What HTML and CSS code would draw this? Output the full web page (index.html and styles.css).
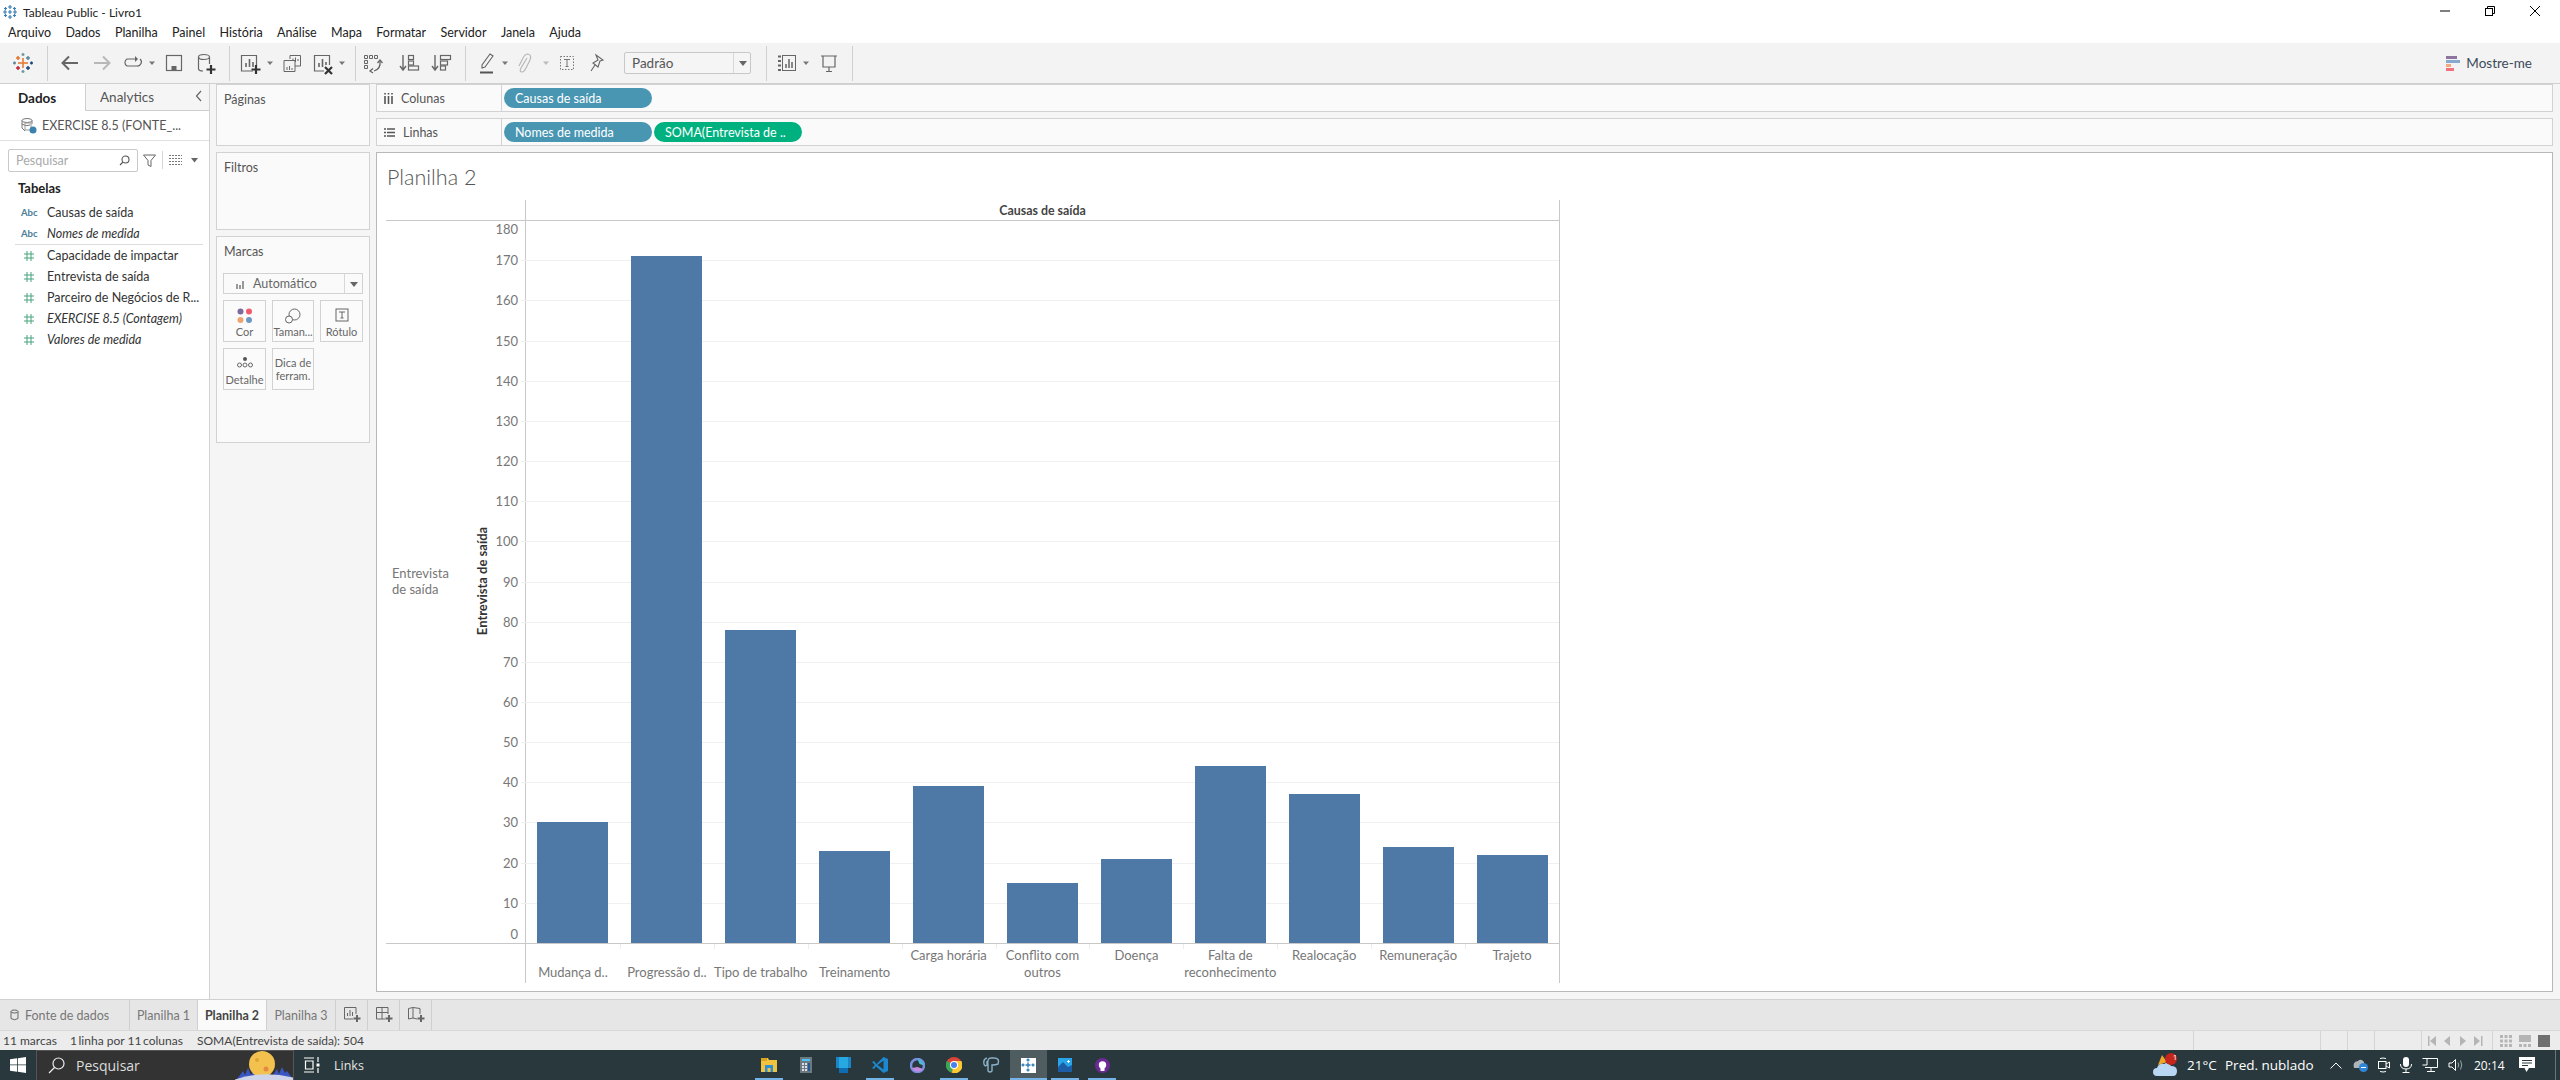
FILE: index.html
```html
<!DOCTYPE html>
<html lang="pt-BR">
<head>
<meta charset="utf-8">
<title>Tableau Public - Livro1</title>
<link rel="stylesheet" href="styles.css">
</head>
<body>
<header class="titlebar">
  <svg class="app-logo" width="16" height="16" viewBox="-8 -8 16 16"><g stroke="#3a7fb5" stroke-width="1.2" fill="none"><path d="M-2 0H2M0-2V2M-2-5H2M0-7V-3M-2 5H2M0 3V7M-7 0H-3M-5-2V2M3 0H7M5-2V2M-6-3.5H-3M-4.500-5V-2M3-3.500H6M4.500-5V-2M-6 3.500H-3M-4.500 2V5M3 3.500H6M4.500 2V5"/></g></svg>
  <span class="title-text">Tableau Public - Livro1</span>
  <div class="win-controls">
    <svg width="16" height="16" viewBox="0 0 16 16"><path d="M3 8H13" stroke="#000" stroke-width="1"/></svg>
    <svg width="16" height="16" viewBox="0 0 16 16" fill="none" stroke="#000"><rect x="3.500" y="5.500" width="7" height="7"/><path d="M5.500 5.500V3.500H12.500V10.500H10.500"/></svg>
    <svg width="16" height="16" viewBox="0 0 16 16"><path d="M3 3L13 13M13 3L3 13" stroke="#000" stroke-width="1"/></svg>
  </div>
</header>
<nav class="menubar">
  <span>Arquivo</span><span>Dados</span><span>Planilha</span><span>Painel</span><span>História</span><span>Análise</span><span>Mapa</span><span>Formatar</span><span>Servidor</span><span>Janela</span><span>Ajuda</span>
</nav>
<div class="toolbar">
  <svg width="39" height="40" viewBox="-15 -20 39 40" fill="none" stroke-width="1.500"><path stroke="#e8762d" d="M-5 0H5M0-5V5M-7-5H-3M-5-7V-3"/><path stroke="#5b879b" d="M3-5H7M5-7V-3M-10 0H-7M-8.500-1.500V1.500"/><path stroke="#c72037" d="M-7 5H-3M-5 3V7"/><path stroke="#1f447a" d="M3 5H7M5 3V7M7 0H10M8.500-1.500V1.500"/><path stroke="#7099a6" d="M-1.500-8.500H1.500M0-10V-7M-1.500 8.500H1.500M0 7V10"/></svg>
  <i class="sep"></i>
  <svg width="38" height="40" viewBox="-22 -20 38 40" fill="none" stroke="#666" stroke-width="2"><path d="M8 0H-7M-1-6.500L-7.500 0L-1 6.500"/></svg>
  <svg width="31" height="40" viewBox="-16 -20 31 40" fill="none" stroke="#b8b8b8" stroke-width="2"><path d="M-8 0H7M1-6.500L7.500 0L1 6.500"/></svg>
  <svg width="30" height="40" viewBox="-15 -20 30 40" fill="none" stroke="#666" stroke-width="1.200"><path d="M3-4H-5A4 4 0 0 0-5 3H5A4 4 0 0 0 8-4"/><path d="M3-7L6-4L3-1" fill="#666" stroke="none"/></svg>
  <svg width="11" height="40" viewBox="-5 -20 11 40"><path d="M-3-1.500H3L0 2Z" fill="#777"/></svg>
  <svg width="32" height="40" viewBox="-16 -20 32 40" fill="none" stroke="#666" stroke-width="1.200"><rect x="-7.500" y="-7.500" width="15" height="15"/><rect x="-2.500" y="3" width="5" height="4.500" fill="#666" stroke="none"/></svg>
  <svg width="39" height="40" viewBox="-15 -20 39 40" fill="none" stroke="#666" stroke-width="1.200"><ellipse cx="-1" cy="-6" rx="5.500" ry="2.500"/><path d="M-6.500-6V6Q-6 8-2 8M4.500-6V1"/><path d="M6 2V11M1.500 6.500H10.500" stroke="#333" stroke-width="2.200"/></svg>
  <i class="sep"></i>
  <svg width="34" height="40" viewBox="-19 -20 34 40" fill="none" stroke="#666" stroke-width="1.200"><path d="M4 8H-7.500V-7.500H7.500V3"/><path d="M-3 4V0M0.500 4V-4M4 4V-1" stroke-width="1.600"/><path d="M7 2V11M2.500 6.500H11.500" stroke="#333" stroke-width="2.200"/></svg>
  <svg width="12" height="40" viewBox="-6 -20 12 40"><path d="M-3-1.500H3L0 2Z" fill="#777"/></svg>
  <svg width="31" height="40" viewBox="-16 -20 31 40" fill="none" stroke="#666" stroke-width="1"><path d="M-2-4V-7.500H8.500V3H3"/><path d="M-8-2.500H3V8.500H-8Z"/><path d="M1-2V-4.500M3.500-1V-5.500M6-2V-4"/><path d="M-5 7V4M-2.500 7V3M0 7V5"/></svg>
  <svg width="29" height="40" viewBox="-15 -20 29 40" fill="none" stroke="#666" stroke-width="1.200"><path d="M2 8H-7.500V-7.500H7.500V2"/><path d="M-3 4V0M0.500 4V-4M4 2V-1" stroke-width="1.600"/><path d="M3 4L10 11M10 4L3 11" stroke="#333" stroke-width="2.200"/></svg>
  <svg width="19" height="40" viewBox="-6 -20 19 40"><path d="M-3-1.500H3L0 2Z" fill="#777"/></svg>
  <i class="sep"></i>
  <svg width="38" height="40" viewBox="-21 -20 38 40" fill="none" stroke="#666" stroke-width="1"><path d="M-12.500-7.500h3v3h-3zM-7.500-7.500h3v3h-3zM-2.500-7.500h3v3h-3zM-12.500-2.500h3v3h-3zM-12.500 2.500h3v3h-3z"/><path d="M3-2Q4 6-3 8" stroke-width="1.300"/><path d="M0.500 0L3-3L5.500 0M-4 5.500L-7 8L-4 10" stroke-width="1.300"/></svg>
  <svg width="32" height="40" viewBox="-16 -20 32 40" fill="none" stroke="#666" stroke-width="1.200"><path d="M-7-8V6M-10 3L-7 7L-4 3" stroke-width="1.400"/><rect x="-1.500" y="-7.500" width="5" height="4"/><rect x="-1.500" y="-2" width="5" height="4"/><rect x="-1.500" y="3" width="10" height="4"/></svg>
  <svg width="39" height="40" viewBox="-16 -20 39 40" fill="none" stroke="#666" stroke-width="1.200"><path d="M-7-8V6M-10 3L-7 7L-4 3" stroke-width="1.400"/><rect x="-1.500" y="-7.500" width="10" height="4"/><rect x="-1.500" y="-2" width="7" height="4"/><rect x="-1.500" y="3" width="5" height="4"/></svg>
  <i class="sep"></i>
  <svg width="32" height="40" viewBox="-21 -20 32 40" fill="none" stroke="#666" stroke-width="1.100"><path d="M3-9L6-7L-2 4L-5 5L-5 2Z"/><path d="M-7 9.500H6" stroke="#555" stroke-width="2"/></svg>
  <svg width="14" height="40" viewBox="-7 -20 14 40"><path d="M-3-1.500H3L0 2Z" fill="#777"/></svg>
  <svg width="25" height="40" viewBox="-12 -20 25 40" fill="none" stroke="#b8b8b8" stroke-width="1.200"><path d="M3-5L-3 5Q-5 9-2 9Q0 9 2 5L6-3Q8-8 4-9Q1-9-1-5L-5 3"/></svg>
  <svg width="18" height="40" viewBox="-9 -20 18 40"><path d="M-3-1.500H3L0 2Z" fill="#bbb"/></svg>
  <svg width="27" height="40" viewBox="-12 -20 27 40" fill="none" stroke="#777"><rect x="-6.500" y="-6.500" width="13" height="13" stroke-dasharray="1.500 1.500"/><path d="M-3-3.500H3M0-3.500V3.500M-1.500 3.500H1.500"/></svg>
  <svg width="34" height="40" viewBox="-15 -20 34 40" fill="none" stroke="#666" stroke-width="1.100"><path d="M-1-8L6-3L3-2L1 4L-4 0L1-3Z"/><path d="M-2 2L-6 8"/></svg>
  <div class="style-select"><span>Padrão</span><b></b></div>
  <i class="sep"></i>
  <svg width="31" height="40" viewBox="-20 -20 31 40" fill="none" stroke="#666"><path d="M-9-6.500H-6M-9-2H-6M-9 2.500H-6M-9 7H-6" stroke-width="2"/><rect x="-4.500" y="-7.500" width="13" height="15"/><path d="M-1 5V1M2 5V-4M5 5V-1" stroke-width="1.500"/></svg>
  <svg width="16" height="40" viewBox="-8 -20 16 40"><path d="M-3-1.500H3L0 2Z" fill="#777"/></svg>
  <svg width="38" height="40" viewBox="-15 -20 38 40" fill="none" stroke="#666" stroke-width="1.200"><path d="M-8-7H8M-6-7V4H6V-7M0 4V8M-3 8.500H3"/></svg>
  <i class="sep"></i>
  <div class="show-me">
    <svg width="14" height="15" viewBox="0 0 14 15"><rect width="11" height="3" fill="#8c76a0"/><rect y="4" width="14" height="3" fill="#88a9ce"/><rect y="8" width="5" height="3" fill="#f3a97b"/><rect y="12" width="8" height="3" fill="#f5707f"/></svg>
    <span>Mostre-me</span>
  </div>
</div>
<main class="workspace">
  <aside class="data-pane">
    <div class="pane-tabs">
      <div class="pane-tab active">Dados</div>
      <div class="pane-tab">Analytics<svg width="8" height="12" viewBox="0 0 8 12"><path d="M6 1L1.500 6L6 11" fill="none" stroke="#666" stroke-width="1.200"/></svg></div>
    </div>
    <div class="source">
      <svg width="17" height="17" viewBox="0 0 17 17" fill="none" stroke="#777"><ellipse cx="7" cy="3.500" rx="5" ry="2"/><path d="M2 3.500V11L5 14M12 3.500V7M2 7Q6 10 10 8"/><rect x="5" y="6" width="6" height="7" stroke="#999"/><circle cx="13" cy="13" r="3.500" fill="#3b82b0" stroke="none"/></svg>
      <span>EXERCISE 8.5 (FONTE_...</span>
    </div>
    <div class="search-row">
      <div class="search"><span>Pesquisar</span><svg width="11" height="11" viewBox="0 0 11 11" fill="none" stroke="#555" stroke-width="1.100"><circle cx="6.500" cy="4.500" r="3.500"/><path d="M4 7L1 10"/></svg></div>
      <svg class="funnel" width="13" height="13" viewBox="0 0 13 13" fill="none" stroke="#666"><path d="M0.500 1H12.500L8 6.500V12.500L5 11V6.500Z"/></svg>
      <i class="search-sep"></i>
      <svg class="view" width="13" height="10" viewBox="0 0 13 10" stroke="#777" stroke-dasharray="2 1"><path d="M0 .5H13M0 3.500H13M0 6.500H13M0 9.500H13"/></svg>
      <svg class="view-caret" width="7" height="5" viewBox="0 0 7 5"><path d="M0 0H7L3.500 4.500Z" fill="#666"/></svg>
    </div>
    <h2 class="tables">Tabelas</h2>
    <ul class="fields dims">
      <li><abbr>Abc</abbr><span>Causas de saída</span></li>
      <li class="gen"><abbr>Abc</abbr><span>Nomes de medida</span></li>
    </ul>
    <ul class="fields">
      <li><svg width="10" height="10" viewBox="0 0 10 10"><path d="M3 0V10M7 0V10M0 3H10M0 7H10" stroke="#46a37c"/></svg><span>Capacidade de impactar</span></li>
      <li><svg width="10" height="10" viewBox="0 0 10 10"><path d="M3 0V10M7 0V10M0 3H10M0 7H10" stroke="#46a37c"/></svg><span>Entrevista de saída</span></li>
      <li><svg width="10" height="10" viewBox="0 0 10 10"><path d="M3 0V10M7 0V10M0 3H10M0 7H10" stroke="#46a37c"/></svg><span>Parceiro de Negócios de R...</span></li>
      <li class="gen"><svg width="10" height="10" viewBox="0 0 10 10"><path d="M3 0V10M7 0V10M0 3H10M0 7H10" stroke="#46a37c"/></svg><span>EXERCISE 8.5 (Contagem)</span></li>
      <li class="gen"><svg width="10" height="10" viewBox="0 0 10 10"><path d="M3 0V10M7 0V10M0 3H10M0 7H10" stroke="#46a37c"/></svg><span>Valores de medida</span></li>
    </ul>
  </aside>
  <section class="cards">
    <div class="card pages">Páginas</div>
    <div class="card filters">Filtros</div>
    <div class="card marks">
      <div>Marcas</div>
      <div class="mark-type">
        <svg width="10" height="10" viewBox="0 0 10 10"><path d="M1 10V5M4 10V6M7 10V2" stroke="#999" stroke-width="2"/></svg>
        <span>Automático</span><b></b>
      </div>
      <div class="mark-grid">
        <div class="mark-btn"><svg width="16" height="16" viewBox="0 0 16 16"><circle cx="3.500" cy="3.500" r="3" fill="#7b6a9b"/><circle cx="12" cy="3.500" r="3" fill="#ef5b6b"/><circle cx="3.500" cy="12" r="3" fill="#f0a36f"/><circle cx="12" cy="12" r="3" fill="#6f97c4"/></svg><span>Cor</span></div>
        <div class="mark-btn"><svg width="16" height="16" viewBox="0 0 16 16" fill="none" stroke="#666"><circle cx="9.500" cy="6.500" r="5.500"/><circle cx="4" cy="11.500" r="3.500" fill="#fafafa"/></svg><span>Taman...</span></div>
        <div class="mark-btn"><svg width="14" height="14" viewBox="0 0 14 14" fill="none" stroke="#666"><rect x="1" y="1" width="12" height="12"/><path d="M4 4H10M7 4V10M5.500 10H8.500"/></svg><span>Rótulo</span></div>
        <div class="mark-btn"><svg width="16" height="12" viewBox="0 0 16 12" fill="none" stroke="#666"><circle cx="8" cy="3" r="2" fill="#555" stroke="none"/><circle cx="2.500" cy="9" r="2"/><circle cx="8" cy="9" r="2"/><circle cx="13.500" cy="9" r="2"/></svg><span>Detalhe</span></div>
        <div class="mark-btn tip"><span>Dica de<br>ferram.</span></div>
      </div>
    </div>
  </section>
  <section class="canvas">
    <div class="shelf">
      <div class="shelf-label"><svg width="9" height="11" viewBox="0 0 9 11"><path d="M1 3V11M4.500 3V11M8 3V11" stroke="#555" stroke-width="1.600"/><path d="M1 0V1.500M4.500 0V1.500M8 0V1.500" stroke="#555" stroke-width="1.600"/></svg><span>Colunas</span></div>
      <div class="pill dim">Causas de saída</div>
    </div>
    <div class="shelf">
      <div class="shelf-label"><svg width="11" height="9" viewBox="0 0 11 9"><path d="M0 1H2M3 1H11M0 4.500H2M3 4.500H11M0 8H2M3 8H11" stroke="#555" stroke-width="1.500"/></svg><span>Linhas</span></div>
      <div class="pill dim">Nomes de medida</div>
      <div class="pill meas">SOMA(Entrevista de ..</div>
    </div>
    <div class="viz">
      <h1 class="viz-title">Planilha 2</h1>
      <div class="chart">
        <div class="corner"></div>
        <div class="col-title">Causas de saída</div>
        <div class="row-side">
          <div class="row-name">Entrevista<br>de saída</div>
          <div class="axis-title">Entrevista de saída</div>
          <span class="tick" style="top:8px">180</span>
          <span class="tick" style="top:39px">170</span>
          <span class="tick" style="top:79px">160</span>
          <span class="tick" style="top:120px">150</span>
          <span class="tick" style="top:160px">140</span>
          <span class="tick" style="top:200px">130</span>
          <span class="tick" style="top:240px">120</span>
          <span class="tick" style="top:280px">110</span>
          <span class="tick" style="top:320px">100</span>
          <span class="tick" style="top:361px">90</span>
          <span class="tick" style="top:401px">80</span>
          <span class="tick" style="top:441px">70</span>
          <span class="tick" style="top:481px">60</span>
          <span class="tick" style="top:521px">50</span>
          <span class="tick" style="top:561px">40</span>
          <span class="tick" style="top:601px">30</span>
          <span class="tick" style="top:642px">20</span>
          <span class="tick" style="top:682px">10</span>
          <span class="tick" style="top:713px">0</span>
        </div>
        <div class="plot">
          <i class="grid" style="top:39px"></i><i class="grid" style="top:79px"></i><i class="grid" style="top:120px"></i><i class="grid" style="top:160px"></i><i class="grid" style="top:200px"></i><i class="grid" style="top:240px"></i><i class="grid" style="top:280px"></i><i class="grid" style="top:320px"></i><i class="grid" style="top:361px"></i><i class="grid" style="top:401px"></i><i class="grid" style="top:441px"></i><i class="grid" style="top:481px"></i><i class="grid" style="top:521px"></i><i class="grid" style="top:561px"></i><i class="grid" style="top:601px"></i><i class="grid" style="top:642px"></i><i class="grid" style="top:682px"></i>
          <div class="bars">
            <div class="slot"><div class="bar" style="height:121px"></div></div>
            <div class="slot"><div class="bar" style="height:687px"></div></div>
            <div class="slot"><div class="bar" style="height:313px"></div></div>
            <div class="slot"><div class="bar" style="height:92px"></div></div>
            <div class="slot"><div class="bar" style="height:157px"></div></div>
            <div class="slot"><div class="bar" style="height:60px"></div></div>
            <div class="slot"><div class="bar" style="height:84px"></div></div>
            <div class="slot"><div class="bar" style="height:177px"></div></div>
            <div class="slot"><div class="bar" style="height:149px"></div></div>
            <div class="slot"><div class="bar" style="height:96px"></div></div>
            <div class="slot"><div class="bar" style="height:88px"></div></div>
          </div>
        </div>
        <div class="corner-low"></div>
        <div class="labels">
          <div class="label low">Mudança d..</div>
          <div class="label low">Progressão d..</div>
          <div class="label low">Tipo de trabalho</div>
          <div class="label low">Treinamento</div>
          <div class="label">Carga horária</div>
          <div class="label">Conflito com<br>outros</div>
          <div class="label">Doença</div>
          <div class="label">Falta de<br>reconhecimento</div>
          <div class="label">Realocação</div>
          <div class="label">Remuneração</div>
          <div class="label">Trajeto</div>
        </div>
      </div>
    </div>
  </section>
</main>
<div class="sheet-tabs">
  <div class="sheet source-tab"><svg width="9" height="12" viewBox="0 0 9 12" fill="none" stroke="#666"><ellipse cx="4.500" cy="2.500" rx="3.500" ry="1.500"/><path d="M1 2.500V9.500Q4.500 12 8 9.500V2.500"/></svg>Fonte de dados</div>
  <div class="sheet s1">Planilha 1</div>
  <div class="sheet s2 current">Planilha 2</div>
  <div class="sheet s3">Planilha 3</div>
  <div class="sheet add"><svg width="17" height="16" viewBox="0 0 17 16" fill="none" stroke="#666"><path d="M9 12H.5V.5H12V7"/><path d="M3.500 9V6M6 9V3M8.500 9V5"/><path d="M13 8V15M9.500 11.500H16.500" stroke-width="2"/></svg></div>
  <div class="sheet add"><svg width="17" height="16" viewBox="0 0 17 16" fill="none" stroke="#666"><path d="M9 12H.5V.5H12V7M.5 5.500H12M6 .5V12"/><path d="M13 8V15M9.500 11.500H16.500" stroke-width="2"/></svg></div>
  <div class="sheet add"><svg width="17" height="16" viewBox="0 0 17 16" fill="none" stroke="#666"><path d="M9 12L5 11V.5L.5 1.500V12L5 11M5 .5L12 1.500V7"/><path d="M13 8V15M9.500 11.500H16.500" stroke-width="2"/></svg></div>
</div>
<footer class="status">
  <span class="st-marks">11 marcas</span>
  <span class="st-dim">1 linha&nbsp; por&nbsp; 11 colunas</span>
  <span class="st-sum">SOMA(Entrevista de saída): 504</span>
  <div class="st-cells">
    <i class="st-a"></i><i class="st-b"></i><i class="st-c"></i><i class="st-d"></i>
    <div class="st-nav">
      <svg width="60" height="12" viewBox="0 0 60 12" fill="#b5b5b5"><path d="M1 1H2.500V11H1ZM9 1V11L3 6ZM23 1V11L17 6ZM33 1L39 6L33 11ZM47 1L53 6L47 11ZM54 1H55.500V11H54Z"/></svg>
    </div>
    <div class="st-views">
      <svg width="12" height="12" viewBox="0 0 12 12" fill="#b5b5b5"><path d="M0 0h3v3H0zM4.500 0h3v3h-3zM9 0h3v3H9zM0 4.500h3v3H0zM4.500 4.500h3v3h-3zM9 4.500h3v3H9zM0 9h3v3H0zM4.500 9h3v3h-3zM9 9h3v3H9z"/></svg>
      <svg width="12" height="12" viewBox="0 0 12 12" fill="#b5b5b5"><path d="M0 0h12v7H0zM0 9h3v3H0zM4.500 9h3v3h-3zM9 9h3v3H9z"/></svg>
      <svg width="12" height="12" viewBox="0 0 12 12" fill="#6f6f6f"><rect width="12" height="12"/></svg>
    </div>
  </div>
</footer>
<div class="taskbar">
  <div class="start"><svg width="16" height="16" viewBox="0 0 16 16" fill="#fff"><path d="M0 2.300L7 1.300V7.500H0ZM7.800 1.200L16 0V7.500H7.800ZM0 8.300H7V14.700L0 13.700ZM7.800 8.300H16V16L7.800 14.800Z"/></svg></div>
  <div class="tb-search">
    <svg width="17" height="17" viewBox="0 0 17 17" fill="none" stroke="#eee" stroke-width="1.200"><circle cx="10.500" cy="6.500" r="5.500"/><path d="M6.500 10.500L1 16"/></svg>
    <span>Pesquisar</span>
    <svg class="moon" width="60" height="30" viewBox="0 0 60 30"><path d="M2 28L8 20L10 24L13 17L16 24L19 18L22 24L30 26L38 24L42 18L44 23L47 16L50 22L52 20L58 28Z" fill="#3a56c4"/><circle cx="27" cy="13" r="13" fill="#f2c14e"/><circle cx="22" cy="9" r="2" fill="#dfa43a"/><circle cx="31" cy="18" r="2.500" fill="#e58a45"/><path d="M-4 30Q26 18 60 27V30Z" fill="#cfd4e8"/></svg>
  </div>
  <div class="task-view"><svg width="16" height="16" viewBox="0 0 16 16" fill="none" stroke="#fff" stroke-width="1.200"><path d="M0 1H10M0 15H10M1.500 4H9V12H1.500ZM14 0V5M14 11V16"/><rect x="12.500" y="6.500" width="3" height="3" fill="#fff" stroke="none"/></svg></div>
  <span class="links">Links</span>
  <div class="apps">
    <div class="app open"><svg width="16" height="14" viewBox="0 0 16 14"><path d="M0 0H7L8 2H16V14H0Z" fill="#f3c33f"/><path d="M0 0H6V3H0Z" fill="#d9a21f"/><path d="M4 14V7H12V14H9.500V10H6.500V14Z" fill="#2b8fd6"/></svg></div>
    <div class="app"><svg width="12" height="16" viewBox="0 0 12 16"><rect width="12" height="16" fill="#6c7a80"/><rect x="2" y="2" width="8" height="2" fill="#4fc3f7"/><path d="M2 6h2v2H2zM5 6h2v2H5zM2 9h2v2H2zM5 9h2v2H5zM2 12h2v2H2zM5 12h2v2H5z" fill="#dde"/><rect x="8" y="6" width="2" height="8" fill="#1d5a9c"/></svg></div>
    <div class="app"><svg width="15" height="16" viewBox="0 0 15 16"><rect width="15" height="11" fill="#1a86c9"/><path d="M3 0H12V11L7.500 13L3 11Z" fill="#28a8e0"/><rect x="3" y="11" width="9" height="5" fill="#0f6cb0"/></svg></div>
    <div class="app open"><svg width="16" height="16" viewBox="0 0 16 16"><path d="M11.500 0L16 2V14L11.500 16L3 8.500Z" fill="#1b88d0"/><path d="M11.500 3.500V12.500L5.500 8Z" fill="#2b3a3d"/><path d="M0 5L2 4L5 8L2 12L0 11L3 8Z" fill="#1b88d0"/></svg></div>
    <div class="app"><svg width="15" height="15" viewBox="0 0 15 15"><circle cx="7.500" cy="7.500" r="6.500" fill="none" stroke="#7a8fe0" stroke-width="2.500"/><path d="M5.500 4.500L11 7.500L5.500 10.500Z" fill="#2b3a3d"/><path d="M2 10A6.500 6.500 0 0 0 13 11L7.500 9Z" fill="#c48be0"/><path d="M7.500 1A6.500 6.500 0 0 1 14 7.500L9.500 6Z" fill="#4cb8d8"/></svg></div>
    <div class="app open"><svg width="16" height="16" viewBox="0 0 16 16"><circle cx="8" cy="8" r="8" fill="#db4437"/><path d="M8 8L1 4A8 8 0 0 0 6 15.800Z" fill="#3aa757"/><path d="M8 4H15.300A8 8 0 0 1 6 15.800Z" fill="#fcc934"/><circle cx="8" cy="8" r="4" fill="#fff"/><circle cx="8" cy="8" r="3" fill="#4a7ff0"/></svg></div>
    <div class="app"><svg width="17" height="16" viewBox="0 0 17 16" fill="none" stroke="#8ab0c8" stroke-width="1.400"><path d="M4 1Q0 2 1 7Q2 10 4 8V4M8 1Q4 1 5 8V14Q7 16 9 14V8Q13 8 15 7Q17 1 11 1H8Z"/></svg></div>
    <div class="app running"><span class="tile"><svg width="14" height="14" viewBox="-7 -7 14 14" fill="none" stroke="#2f7fb5" stroke-width="1.400"><path d="M-2.500 0H2.500M0-2.500V2.500M-1.500-5H1.500M0-6.500V-3.500M-1.500 5H1.500M0 3.500V6.500M-6.500 0H-3.500M-5-1.500V1.500M3.500 0H6.500M5-1.500V1.500"/></svg></span></div>
    <div class="app open"><svg width="14" height="14" viewBox="0 0 14 14"><rect width="14" height="14" fill="#28a4e8"/><path d="M0 14V9L5 4L10 9L14 7V14Z" fill="#1c5ea6"/><path d="M10 2H11V3H12V4H11V5H10V4H9V3H10Z" fill="#fff"/></svg></div>
    <div class="app open"><svg width="15" height="15" viewBox="0 0 15 15"><circle cx="7.500" cy="7.500" r="7.500" fill="#6b2a95"/><circle cx="7.500" cy="7" r="3.700" fill="#fff"/><path d="M5.500 13V10H9.500V13Z" fill="#fff"/></svg></div>
  </div>
  <div class="tray">
    <svg class="weather" width="26" height="24" viewBox="0 0 26 24"><path d="M5 12L9 2L14 9Z" fill="#f0a52b"/><path d="M4 23Q0 23 0 19Q0 15 4 15Q6 10 11 11Q15 8 18 13Q24 13 24 18Q24 23 20 23Z" fill="#b9d6f2"/><circle cx="18" cy="6" r="6" fill="#c4261d"/></svg>
    <span class="badge">1</span>
    <span class="temp">21°C</span>
    <span class="cond">Pred. nublado</span>
    <svg class="tray-ico caret-up" width="12" height="7" viewBox="0 0 12 7" fill="none" stroke="#fff"><path d="M.5 6.500L6 1L11.500 6.500"/></svg>
    <svg class="tray-ico" width="16" height="14" viewBox="0 0 16 14"><path d="M2 10Q0 4 6 3Q9 0 12 4L12 10Z" fill="#aeb5ba"/><circle cx="11.500" cy="9.500" r="4.500" fill="#2f86d8"/><path d="M9 9.500H14" stroke="#fff"/></svg>
    <svg class="tray-ico" width="12" height="16" viewBox="0 0 12 16" fill="none" stroke="#fff"><rect x=".5" y="4.500" width="7.500" height="7"/><path d="M8 7L11.500 5V11L8 9M2 1.500Q5 .5 8 1.500M2 14.500Q5 15.500 8 14.500"/></svg>
    <svg class="tray-ico" width="12" height="16" viewBox="0 0 12 16"><rect x="3" y="0" width="6" height="10" rx="3" fill="#fff"/><path d="M.5 7Q.5 12 6 12Q11.500 12 11.500 7M6 12V15M2.500 15.500H9.500" fill="none" stroke="#fff"/></svg>
    <svg class="tray-ico" width="16" height="14" viewBox="0 0 16 14" fill="none" stroke="#fff"><path d="M3 .5H15.500V9.500H3M.5 .5H5V7H.5M9 9.500V13M5 13.500H13"/></svg>
    <svg class="tray-ico" width="16" height="14" viewBox="0 0 16 14" fill="none" stroke="#fff"><path d="M1 5H4L7.500 1.500V12.500L4 9H1Z"/><path d="M10 4.500Q11.500 7 10 9.500M12.500 2.500Q15 7 12.500 11.500" stroke="#9aa"/></svg>
    <span class="clock">20:14</span>
    <svg class="notify" width="16" height="16" viewBox="0 0 16 16"><path d="M0 0H16V11H10L7.500 15L5.500 11H0Z" fill="#fff"/><path d="M3 3.500H13M3 6H13M3 8.500H9" stroke="#2b3a3d"/></svg>
    <i class="peek"></i>
  </div>
</div>
</body>
</html>
```

FILE: styles.css
```css
* { box-sizing: border-box; }
html, body { margin: 0; height: 100%; }
body {
  width: 2560px; height: 1080px; overflow: hidden;
  display: flex; flex-direction: column;
  font-family: "Lato", "Liberation Sans", sans-serif;
  font-size: 12.5px; color: #333; background: #f5f5f5;
}
h1, h2, ul { margin: 0; padding: 0; font-weight: normal; }
i { font-style: normal; display: block; }
abbr { text-decoration: none; }

.titlebar { height: 22px; flex: none; background: #fff; display: flex; align-items: center; padding-left: 2px; color: #222; }
.app-logo { margin-right: 5px; margin-top: 2px; }
.title-text { font-size: 12px; margin-top: 2px; }
.win-controls { margin-left: auto; display: flex; gap: 29px; padding-right: 17px; }

.menubar { height: 21px; flex: none; background: #fff; display: flex; align-items: center; padding-left: 8px; gap: 14.4px; font-size: 12.5px; color: #222; }

.toolbar { height: 41px; flex: none; background: #f3f3f3; border-bottom: 1px solid #cfcfcf; display: flex; align-items: center; padding-left: 8px; }
.sep { width: 1px; height: 35px; background: #d0d0d0; flex: none; }
.style-select { width: 127px; height: 22px; margin: 0 15px 0 8px; border: 1px solid #c8c8c8; border-radius: 2px; background: #f5f5f5; display: flex; align-items: center; padding-left: 7px; font-size: 13.5px; color: #555; position: relative; }
.style-select b { position: absolute; right: 0; top: 0; bottom: 0; width: 17px; border-left: 1px solid #d8d8d8; }
.style-select b::after { content: ""; position: absolute; left: 5px; top: 8px; border: 4px solid transparent; border-top: 5px solid #666; border-bottom: 0; }
.show-me { margin-left: auto; margin-right: 28px; display: flex; align-items: center; gap: 6px; font-size: 13.5px; color: #3c4a5a; }

.workspace { flex: 1; min-height: 0; display: grid; grid-template-columns: 210px 154px 2177px; column-gap: 6px; background: #f5f5f5; }

.data-pane { background: #fff; border-right: 1px solid #d2d2d2; display: flex; flex-direction: column; }
.pane-tabs { height: 27px; display: flex; flex: none; background: #f5f5f5; }
.pane-tab { display: flex; align-items: center; font-size: 13.5px; color: #555; }
.pane-tab.active { width: 86px; background: #fff; font-weight: 700; color: #222; padding-left: 18px; border-right: 1px solid #cfcfcf; }
.pane-tab:not(.active) { flex: 1; padding-left: 14px; border-bottom: 1px solid #cfcfcf; position: relative; }
.pane-tab svg { position: absolute; right: 6px; top: 6px; }
.source { height: 30px; flex: none; display: flex; align-items: center; padding-left: 20px; gap: 5px; border-bottom: 1px solid #e0e0e0; color: #555; }
.search-row { display: flex; align-items: center; height: 22px; margin-top: 8px; padding-left: 8px; flex: none; }
.search { width: 130px; height: 23px; border: 1px solid #c9c9c9; border-radius: 2px; display: flex; align-items: center; justify-content: space-between; padding: 0 7px; color: #aaa; }
.funnel { margin-left: 5px; }
.search-sep { width: 1px; height: 18px; background: #d8d8d8; margin-left: 6px; }
.view { margin-left: 6px; }
.view-caret { margin-left: 9px; }
.tables { font-size: 13px; font-weight: 700; color: #222; margin: 7px 0 0 18px; height: 21px; line-height: 21px; }
.fields { list-style: none; }
.fields li { height: 21px; display: flex; align-items: center; color: #333; padding-left: 24px; }
.fields li abbr { font-size: 9.5px; font-weight: 700; color: #4a7d98; width: 26px; margin-left: -3px; }
.fields li svg { margin-right: 13px; }
.fields li.gen span { font-style: italic; }
.dims { padding-top: 3px; }
.dims::after { content: ""; display: block; height: 1px; background: #dcdcdc; margin: 0 6px 0 15px; }

.cards { display: flex; flex-direction: column; gap: 6px; }
.card { background: #fafafa; border: 1px solid #d2d2d2; padding: 7px; color: #555; }
.pages { height: 62px; }
.filters { height: 78px; }
.marks { height: 207px; }
.mark-type { height: 21px; margin: 14px -1px 0 -1px; border: 1px solid #d2d2d2; display: flex; align-items: center; padding-left: 12px; gap: 7px; position: relative; color: #666; }
.mark-type b { position: absolute; right: 0; top: 0; bottom: 0; width: 18px; border-left: 1px solid #d8d8d8; }
.mark-type b::after { content: ""; position: absolute; left: 5px; top: 8px; border: 4px solid transparent; border-top: 5px solid #666; border-bottom: 0; }
.mark-grid { display: grid; grid-template-columns: 43px 42px 43px; gap: 6px; margin: 6px -1px 0 -1px; justify-content: space-between; }
.mark-btn { height: 42px; border: 1px solid #d2d2d2; background: #fbfbfb; display: flex; flex-direction: column; align-items: center; justify-content: space-between; padding: 7px 0 3px; font-size: 11px; line-height: 13px; color: #666; text-align: center; white-space: nowrap; }
.mark-btn.tip { justify-content: center; padding: 0; }

.canvas { display: flex; flex-direction: column; gap: 6px; min-height: 0; padding-bottom: 7px; }
.shelf { height: 28px; flex: none; background: #fafafa; border: 1px solid #d2d2d2; display: flex; align-items: center; gap: 2px; }
.shelf-label { width: 125px; height: 100%; border-right: 1px solid #d2d2d2; display: flex; align-items: center; gap: 8px; padding-left: 7px; margin-right: 0; color: #555; }
.pill { width: 148px; height: 20px; border-radius: 10px; color: #fff; display: flex; align-items: center; padding-left: 11px; }
.pill.dim { background: #4996b2; }
.pill.meas { background: #00b180; padding-left: 11px; }

.viz { flex: 1; min-height: 0; background: #fff; border: 1px solid #b8b8b8; padding-left: 9px; }
.viz-title { height: 47px; padding: 12px 0 0 1px; font-size: 21.5px; line-height: 25px; font-weight: 300; color: #555; }
.chart { display: grid; grid-template-columns: 139px 1035px; grid-template-rows: 21px 723px 39px; width: 1174px; }
.corner { border-bottom: 1px solid #c8c8c8; }
.col-title { border-left: 1px solid #c8c8c8; border-right: 1px solid #c8c8c8; border-bottom: 1px solid #c8c8c8; display: flex; align-items: center; justify-content: center; font-size: 12.4px; font-weight: 700; color: #444; }
.row-side { position: relative; border-bottom: 1px solid #c8c8c8; }
.row-name { position: absolute; left: 6px; top: 344px; font-size: 13px; line-height: 16px; color: #777; }
.axis-title { position: absolute; left: 96px; top: 360px; transform: translate(-50%, -50%) rotate(-90deg); white-space: nowrap; font-size: 13px; font-weight: 700; color: #333; }
.tick { position: absolute; right: 7px; transform: translateY(-50%); font-size: 13px; line-height: 15px; color: #777; }
.plot { position: relative; border-left: 1px solid #c8c8c8; border-right: 1px solid #c8c8c8; border-bottom: 1px solid #c8c8c8; }
.grid { position: absolute; left: -5px; right: 0; height: 1px; background: #f0f0f0; }
.bars { position: absolute; inset: 0; display: flex; align-items: flex-end; }
.slot { flex: 1; display: flex; justify-content: center; }
.bar { width: 71px; background: #4e79a7; }
.labels { display: flex; border-left: 1px solid #c8c8c8; border-right: 1px solid #c8c8c8; }
.label { flex: 1 1 0; min-width: 0; position: relative; text-align: center; font-size: 13px; line-height: 17px; color: #777; padding-top: 3px; white-space: nowrap; }
.label.low { padding-top: 20px; }
.label + .label::before { content: ""; position: absolute; left: 0; top: 0; height: 5px; width: 1px; background: #ececec; }

.sheet-tabs { height: 31px; flex: none; background: #e6e6e6; border-top: 1px solid #d0d0d0; display: flex; color: #777; font-size: 12.5px; }
.sheet { display: flex; align-items: center; justify-content: center; border-right: 1px solid #cfcfcf; }
.source-tab { width: 130px; justify-content: flex-start; padding-left: 10px; gap: 6px; }
.s1 { width: 68px; }
.s2 { width: 69px; }
.s3 { width: 69px; }
.sheet.current { background: #fafafa; font-weight: 700; color: #444; }
.sheet.add { width: 32px; padding-left: 2px; }

.status { height: 20px; flex: none; background: #ececec; border-top: 1px solid #d8d8d8; display: flex; align-items: center; font-size: 12px; color: #444; }
.st-marks { width: 70px; padding-left: 3px; }
.st-dim { width: 127px; word-spacing: -1.5px; }
.st-sum { width: 190px; }
.st-cells { margin-left: auto; display: flex; height: 100%; width: 367px; flex: none; }
.st-cells i { border-left: 1px solid #d4d4d4; height: 100%; flex: none; }
.st-a { width: 127px; }
.st-b { width: 27px; }
.st-c { width: 27px; }
.st-d { width: 47px; }
.st-nav { width: 71px; border-left: 1px solid #d4d4d4; display: flex; align-items: center; justify-content: center; }
.st-views { flex: 1; border-left: 1px solid #d4d4d4; display: flex; align-items: center; gap: 7px; padding-left: 7px; }

.taskbar { height: 30px; flex: none; background: #29383c; display: flex; align-items: center; color: #fff; font-family: "Open Sans", "Liberation Sans", sans-serif; font-size: 12.5px; }
.start { width: 36px; display: flex; justify-content: center; align-items: center; }
.tb-search { width: 258px; height: 30px; background: #333; border: 1px solid #555; border-width: 1px 1px 0; display: flex; align-items: center; padding-left: 11px; gap: 11px; color: #ddd; font-size: 14px; position: relative; overflow: hidden; }
.moon { position: absolute; right: -2px; top: 0; }
.task-view { width: 36px; display: flex; justify-content: center; }
.links { margin-left: 4px; color: #e4e4e4; }
.apps { display: flex; margin-left: 387px; }
.app { width: 37px; height: 30px; display: flex; align-items: center; justify-content: center; position: relative; }
.app.open::after { content: ""; position: absolute; left: 4px; right: 5px; bottom: 0; height: 2px; background: #74b4e6; }
.app.running { background: #4f5d60; }
.app.running::after { content: ""; position: absolute; left: 0; right: 0; bottom: 0; height: 2px; background: #74b4e6; }
.tile { width: 15px; height: 15px; background: #fff; display: flex; align-items: center; justify-content: center; }
.tray { margin-left: auto; display: flex; align-items: center; height: 100%; position: relative; width: 408px; }
.weather { margin-left: 1px; }
.badge { position: absolute; left: 17px; top: 1px; width: 12px; text-align: center; font-size: 8px; line-height: 12px; color: #fff; }
.temp { margin-left: 8px; font-size: 13.5px; width: 29px; white-space: nowrap; }
.cond { margin-left: 9px; font-size: 13.5px; width: 98px; white-space: nowrap; }
.tray-ico { margin-right: 10px; flex: none; }
.caret-up { margin-left: 7px; }
.clock { font-size: 12px; width: 40px; }
.notify { margin-left: 5px; }
.peek { position: absolute; right: 4px; top: 0; bottom: 0; width: 1px; background: #6a7679; }
```
